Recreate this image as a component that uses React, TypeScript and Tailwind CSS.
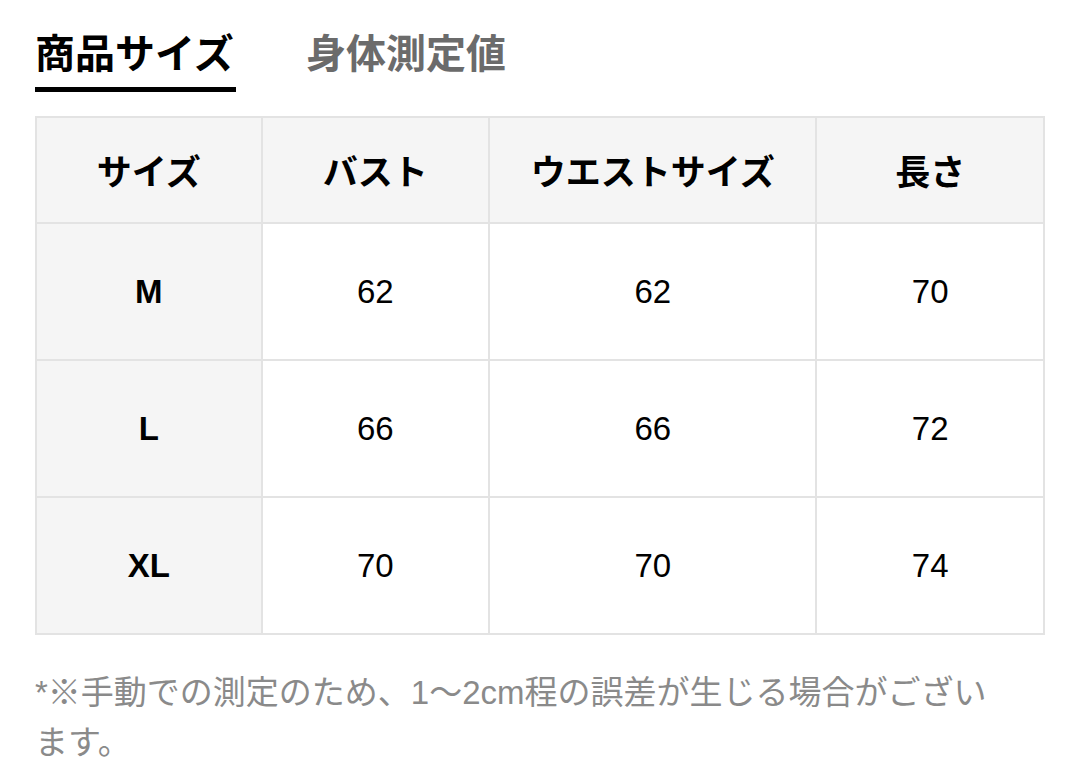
const rows = [
  { size: 'M', bust: '62', waist: '62', length: '70' },
  { size: 'L', bust: '66', waist: '66', length: '72' },
  { size: 'XL', bust: '70', waist: '70', length: '74' },
];

const App = () => {
  return (
    <div className="min-h-screen bg-white px-[35px] pt-[26px] font-['Noto_Sans_CJK_JP',sans-serif]">
      {/* Tabs */}
      <div className="flex gap-[70px]">
        <div className="flex flex-col">
          <span className="text-[40px] leading-[50px] font-bold text-black">商品サイズ</span>
          <div className="mt-[11px] h-[5px] w-[201px] bg-black" />
        </div>
        <span className="text-[40px] leading-[50px] font-bold text-[#6b6b6b]">身体測定値</span>
      </div>

      {/* Size table */}
      <table className="mt-[24px] w-[1010px] border-collapse text-center">
        <thead>
          <tr className="h-[106px] bg-[#f5f5f5]">
            <th className="w-[226px] border-2 border-[#e3e3e3] text-[35px] font-bold">サイズ</th>
            <th className="w-[228px] border-2 border-[#e3e3e3] text-[35px] font-bold">バスト</th>
            <th className="w-[328px] border-2 border-[#e3e3e3] text-[35px] font-bold">ウエストサイズ</th>
            <th className="w-[228px] border-2 border-[#e3e3e3] text-[35px] font-bold">長さ</th>
          </tr>
        </thead>
        <tbody className="font-['Liberation_Sans',sans-serif] text-[33px] text-black">
          {rows.map((r) => (
            <tr key={r.size} className="h-[137px]">
              <td className="border-2 border-[#e3e3e3] bg-[#f5f5f5] font-bold">{r.size}</td>
              <td className="border-2 border-[#e3e3e3]">{r.bust}</td>
              <td className="border-2 border-[#e3e3e3]">{r.waist}</td>
              <td className="border-2 border-[#e3e3e3]">{r.length}</td>
            </tr>
          ))}
        </tbody>
      </table>

      <p className="mt-[33px] w-[968px] text-[33px] leading-[50px] text-[#8a8a8a] font-['Liberation_Sans','Noto_Sans_CJK_JP',sans-serif]">
        *※手動での測定のため、1〜2cm程の誤差が生じる場合がございます。
      </p>
    </div>
  );
};

export default App;
